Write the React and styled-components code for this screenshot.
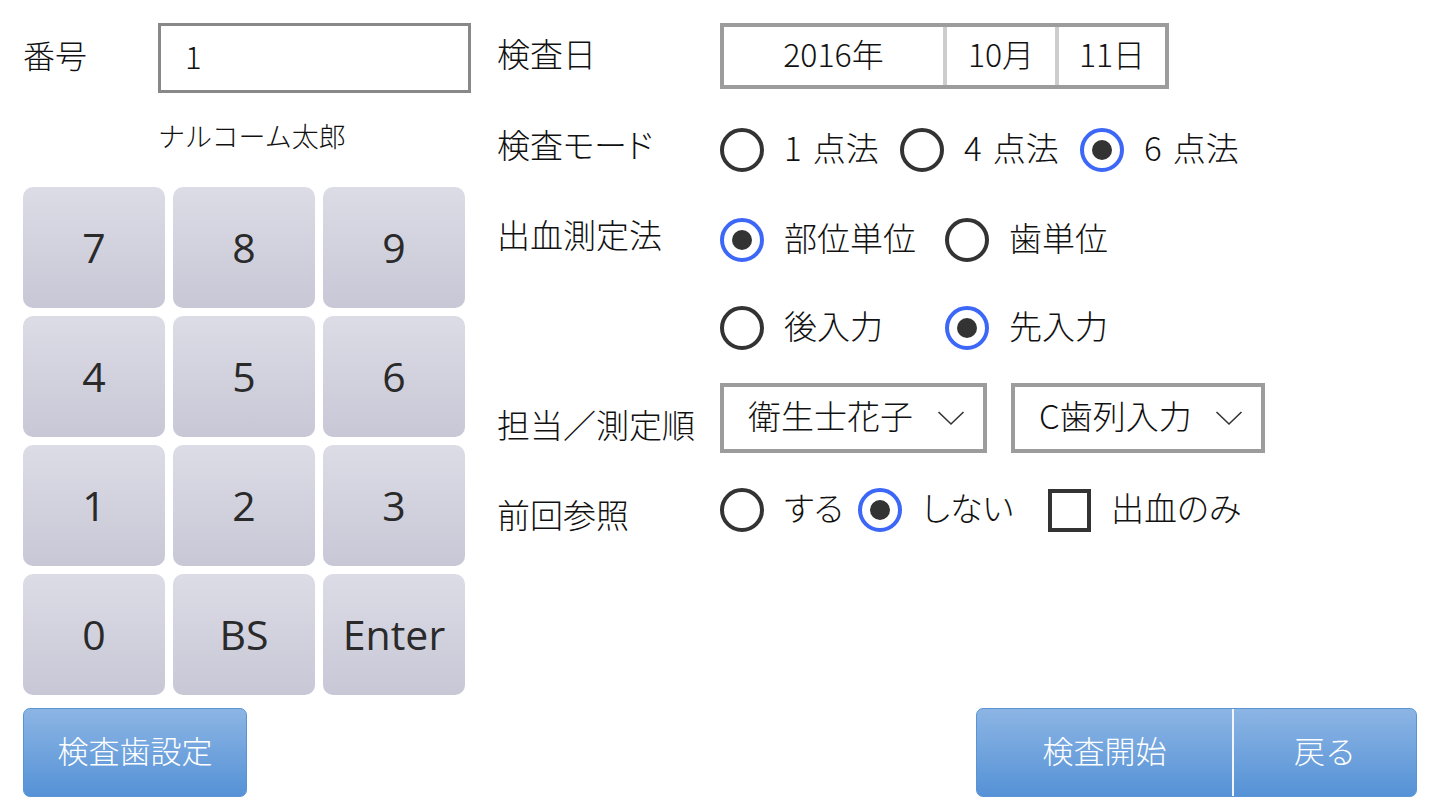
import styled, { createGlobalStyle } from 'styled-components';

const GlobalStyle = createGlobalStyle`
  body {
    margin: 0;
    background: #fff;
    font-family: "Noto Sans CJK JP", "Noto Sans", sans-serif;
    font-weight: 300;
    color: #111;
  }
`;

const keys = ['7', '8', '9', '4', '5', '6', '1', '2', '3', '0', 'BS', 'Enter'];

function Chevron() {
  return (
    <svg width="28" height="16" viewBox="0 0 28 16">
      <path d="M1.5 2 L14 14 L26.5 2" fill="none" stroke="#333" strokeWidth="1.6" />
    </svg>
  );
}

function Radio({ checked, label, w }) {
  return (
    <Option $w={w}>
      <Circle $checked={checked}>{checked && <Dot />}</Circle>
      <OptText>{label}</OptText>
    </Option>
  );
}

function App() {
  return (
    <>
      <GlobalStyle />
      <Page>
        <Main>
          <LeftCol>
            <NumberRow>
              <NumLabel>番号</NumLabel>
              <InputBox>1</InputBox>
            </NumberRow>
            <Name>ナルコーム太郎</Name>
            <Keypad>
              {keys.map((k) => (
                <Key key={k}>{k}</Key>
              ))}
            </Keypad>
          </LeftCol>

          <RightCol>
            <Row $h={66}>
              <Label $dy={-6}>検査日</Label>
              <DateBox>
                <DatePart $w={219}>2016年</DatePart>
                <DatePart $w={108} $sep>10月</DatePart>
                <DatePart $sep>11日</DatePart>
              </DateBox>
            </Row>

            <Row $h={44} $mt={39}>
              <Label $dy={-12}>検査モード</Label>
              <Radio label={'1\u2004点法'} w={180} />
              <Radio label={'4\u2004点法'} w={180} />
              <Radio label={'6\u2004点法'} checked />
            </Row>

            <Row $h={44} $mt={46}>
              <Label $dy={-12}>出血測定法</Label>
              <Radio label="部位単位" checked w={225} />
              <Radio label="歯単位" />
            </Row>

            <Row $h={44} $mt={44}>
              <Label />
              <Radio label="後入力" w={225} />
              <Radio label="先入力" checked />
            </Row>

            <Row $h={70} $mt={33}>
              <Label $dy={12}>担当／測定順</Label>
              <Select $w={267}>
                <SelectText>衛生士花子</SelectText>
                <Chevron />
              </Select>
              <Select $w={254} $ml={24}>
                <SelectText>C歯列入力</SelectText>
                <Chevron />
              </Select>
            </Row>

            <Row $h={44} $mt={35}>
              <Label $dy={8}>前回参照</Label>
              <Radio label="する" w={138} />
              <Radio label="しない" checked w={190} />
              <Option>
                <Box />
                <OptText>出血のみ</OptText>
              </Option>
            </Row>
          </RightCol>
        </Main>

        <Footer>
          <BlueButton $w={224}>検査歯設定</BlueButton>
          <ButtonGroup>
            <GroupPart $w={255}>検査開始</GroupPart>
            <GroupPart $w={184} $sep>戻る</GroupPart>
          </ButtonGroup>
        </Footer>
      </Page>
    </>
  );
}

export default App;

const Page = styled.div`
  width: 1440px;
  height: 810px;
  box-sizing: border-box;
  padding: 23px 23px 0 23px;
  display: flex;
  flex-direction: column;
`;

const Main = styled.div`
  display: flex;
  gap: 26px;
`;

const LeftCol = styled.div`
  width: 448px;
  display: flex;
  flex-direction: column;
`;

const NumberRow = styled.div`
  display: flex;
  align-items: center;
  height: 70px;
`;

const NumLabel = styled.div`
  width: 135px;
  font-size: 32px;
  line-height: 1;
  margin-top: -8px;
`;

const Label = styled.div`
  width: 223px;
  flex-shrink: 0;
  font-size: 33px;
  line-height: 1;
  color: #111;
  font-feature-settings: "palt";
  margin-top: ${(p) => p.$dy || 0}px;
`;

const InputBox = styled.div`
  width: 313px;
  height: 70px;
  box-sizing: border-box;
  border: 3px solid #888;
  padding: 0 0 6px 24px;
  display: flex;
  align-items: center;
  font-size: 31px;
`;

const Name = styled.div`
  height: 94px;
  margin-left: 135px;
  display: flex;
  align-items: center;
  padding-bottom: 10px;
  box-sizing: border-box;
  font-size: 27px;
`;

const Keypad = styled.div`
  display: grid;
  grid-template-columns: repeat(3, 142px);
  grid-auto-rows: 121px;
  column-gap: 8px;
  row-gap: 8px;
`;

const Key = styled.div`
  border-radius: 10px;
  background: linear-gradient(#dcdce6, #c8c7d6);
  display: flex;
  align-items: center;
  justify-content: center;
  font-family: "Open Sans", "Noto Sans", sans-serif;
  font-weight: 400;
  font-size: 41px;
  color: #2a2a2a;
  padding-bottom: 2px;
  box-sizing: border-box;
`;

const RightCol = styled.div`
  display: flex;
  flex-direction: column;
`;

const Row = styled.div`
  display: flex;
  align-items: center;
  height: ${(p) => p.$h}px;
  margin-top: ${(p) => p.$mt || 0}px;
`;

const DateBox = styled.div`
  display: flex;
  width: 449px;
  height: 66px;
  box-sizing: border-box;
  border: 4px solid #9c9c9c;
`;

const DatePart = styled.div`
  ${(p) => (p.$w ? `width: ${p.$w}px;` : 'flex: 1;')}
  display: flex;
  align-items: center;
  justify-content: center;
  font-size: 32px;
  padding-bottom: 6px;
  border-left: ${(p) => (p.$sep ? '4px solid #cdcdcd' : 'none')};
`;

const Option = styled.div`
  display: flex;
  align-items: center;
  gap: 20px;
  ${(p) => p.$w && `width: ${p.$w}px;`}
  flex-shrink: 0;
`;

const Circle = styled.div`
  width: 44px;
  height: 44px;
  box-sizing: border-box;
  border-radius: 50%;
  border: 4px solid ${(p) => (p.$checked ? '#3d67f6' : '#333')};
  display: flex;
  align-items: center;
  justify-content: center;
  background: #fff;
`;

const Dot = styled.div`
  width: 20px;
  height: 20px;
  border-radius: 50%;
  background: #333;
`;

const Box = styled.div`
  width: 43px;
  height: 43px;
  box-sizing: border-box;
  border: 4px solid #333;
  background: #fff;
`;

const OptText = styled.span`
  font-size: 33px;
  line-height: 1;
  color: #111;
  white-space: pre;
  font-feature-settings: "palt";
  margin-top: -6px;
`;

const Select = styled.div`
  width: ${(p) => p.$w}px;
  height: 70px;
  margin-left: ${(p) => p.$ml || 0}px;
  box-sizing: border-box;
  border: 4px solid #9c9c9c;
  display: flex;
  align-items: center;
  justify-content: space-between;
  padding: 0 18px 0 24px;
`;

const SelectText = styled.span`
  font-size: 33px;
  line-height: 1;
  margin-top: -6px;
`;

const Footer = styled.div`
  margin-top: 13px;
  height: 89px;
  display: flex;
  justify-content: space-between;
`;

const BlueButton = styled.div`
  width: ${(p) => p.$w}px;
  box-sizing: border-box;
  border: 1px solid #5a93d7;
  border-radius: 7px;
  background: linear-gradient(#8cb5e4, #5592d6);
  color: #fff;
  font-size: 31px;
  padding-bottom: 6px;
  display: flex;
  align-items: center;
  justify-content: center;
`;

const ButtonGroup = styled.div`
  display: flex;
  box-sizing: border-box;
  border: 1px solid #5a93d7;
  border-radius: 7px;
  overflow: hidden;
  background: linear-gradient(#8cb5e4, #5592d6);
`;

const GroupPart = styled.div`
  width: ${(p) => p.$w}px;
  box-sizing: border-box;
  color: #fff;
  font-size: 31px;
  padding-bottom: 6px;
  display: flex;
  align-items: center;
  justify-content: center;
  border-left: ${(p) => (p.$sep ? '2px solid #f2f6fc' : 'none')};
`;
